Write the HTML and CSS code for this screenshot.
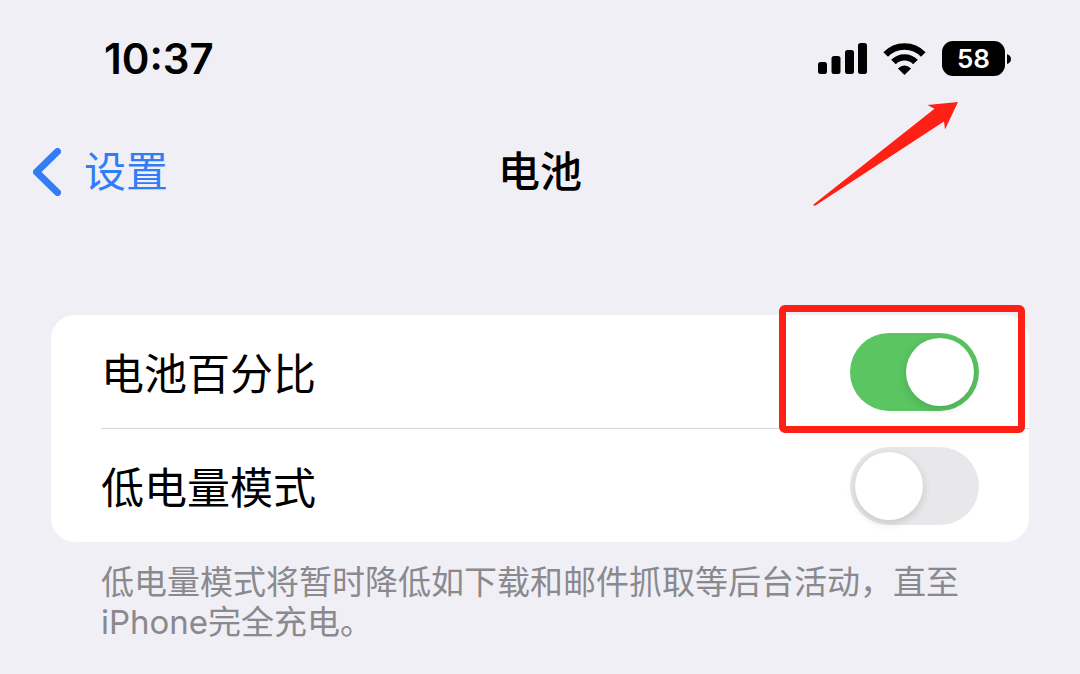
FILE: index.html
```html
<!DOCTYPE html>
<html lang="zh-CN">
<head>
  <meta charset="UTF-8" />
  <meta name="viewport" content="width=device-width, initial-scale=1.0" />
  <title>电池</title>
  <link rel="stylesheet" href="styles.css">
</head>
<body>
  <div class="status-bar">
    <span class="time">10:37</span>
    <div class="status-icons">
      <svg class="signal" viewBox="0 0 49 31" aria-hidden="true">
        <rect x="0" y="19" width="9" height="12" rx="2.5" />
        <rect x="13.5" y="13" width="9" height="18" rx="2.5" />
        <rect x="27" y="7" width="9" height="24" rx="2.5" />
        <rect x="40" y="0" width="9" height="31" rx="2.5" />
      </svg>
      <svg class="wifi" viewBox="0 0 127 94" aria-hidden="true">
        <path class="wave" d="M8 33.5A77 77 0 0 1 119 33.5" />
        <path class="wave" d="M31 56A45 45 0 0 1 96 56" />
        <path d="M63.5 94L44 75Q63.5 57 83 75Z" />
      </svg>
      <div class="battery">
        <span class="battery-level">58</span>
        <svg class="battery-cap" viewBox="0 0 4 10" aria-hidden="true">
          <path d="M0 0Q4 1.5 4 5Q4 8.5 0 10Z" />
        </svg>
      </div>
    </div>
    <svg class="arrow" viewBox="0 0 146 105" aria-hidden="true">
      <path d="M145 0L114.500 3L121.500 6.700L0.500 102.500Q0 104 2 103.700L131 19.500L132 27.500Z" />
    </svg>
  </div>

  <header class="nav">
    <a class="back" href="#">
      <svg class="chevron" viewBox="0 0 28 48" aria-hidden="true">
        <path d="M24.500 3.500L3.500 24L24.500 44.500" />
      </svg>
      设置
    </a>
    <h1>电池</h1>
  </header>

  <main>
    <div class="card">
      <div class="row">
        <label for="percentage">电池百分比</label>
        <input class="switch" type="checkbox" id="percentage" checked>
        <div class="highlight"></div>
      </div>
      <div class="row">
        <label for="lowPower">低电量模式</label>
        <input class="switch" type="checkbox" id="lowPower">
      </div>
    </div>
    <p class="note">低电量模式将暂时降低如下载和邮件抓取等后台活动，直至iPhone完全充电。</p>
  </main>
</body>
</html>
```
FILE: styles.css
```css
:root {
  --page: #f0eff5;
  --blue: #327cf6;
  --green: #5ac561;
  --red: #ff2015;
}

* {
  box-sizing: border-box;
}

body {
  margin: 0;
  font-family: Inter, "Noto Sans CJK SC", sans-serif;
  background-color: var(--page);
  color: #000;
}

.status-bar {
  position: relative;
  display: flex;
  align-items: center;
  justify-content: space-between;
  height: 117px;
  padding: 0 69px 0 104px;
}

.time {
  font-size: 42px;
  font-weight: 600;
}

.status-icons {
  display: flex;
  align-items: center;
  gap: 16px;
}

.signal {
  width: 49px;
  height: 31px;
}

.wifi {
  width: 43px;
  height: 32px;
}

.wave {
  fill: none;
  stroke: #000;
  stroke-width: 19;
}

.battery {
  display: flex;
  align-items: center;
  gap: 2px;
}

.battery-level {
  width: 63px;
  border-radius: 11px;
  background-color: #000;
  color: #fff;
  font-size: 26px;
  font-weight: 600;
  line-height: 35px;
  text-align: center;
}

.battery-cap {
  width: 4px;
  height: 10px;
}

/* points at the battery level */
.arrow {
  position: absolute;
  top: 102px;
  right: 121px;
  width: 146px;
  height: 105px;
  fill: var(--red);
}

.nav {
  display: grid;
  grid-template-columns: 1fr auto 1fr;
  align-items: center;
  height: 110px;
  padding: 0 33px;
}

.back {
  display: flex;
  align-items: center;
  gap: 23px;
  color: var(--blue);
  font-size: 42px;
  line-height: 60px;
  text-decoration: none;
}

.chevron {
  width: 28px;
  height: 48px;
  fill: none;
  stroke: var(--blue);
  stroke-width: 7;
  stroke-linecap: round;
  stroke-linejoin: round;
}

h1 {
  margin: 0;
  font-size: 42px;
  font-weight: 500;
  line-height: 60px;
}

main {
  padding: 88px 51px 30px;
}

.card {
  border-radius: 24px;
  background-color: #fff;
}

.row {
  position: relative;
  display: flex;
  align-items: center;
  justify-content: space-between;
  height: 113px;
  margin-left: 50px;
  padding-right: 50px;
}

.row + .row {
  height: 114px;
  border-top: 1px solid #d9d9dc;
}

.row label {
  padding-top: 4px;
  font-size: 43px;
  line-height: 60px;
}

.switch {
  appearance: none;
  width: 129px;
  height: 78px;
  margin: 0;
  padding: 5px;
  border-radius: 39px;
  background-color: #e8e8ea;
}

.switch::before {
  content: "";
  display: block;
  width: 68px;
  height: 68px;
  border-radius: 50%;
  background-color: #fff;
  box-shadow: 0 3px 10px rgba(0, 0, 0, 0.15);
}

.switch:checked {
  background-color: var(--green);
}

.switch:checked::before {
  margin-left: auto;
}

.highlight {
  position: absolute;
  top: -10px;
  right: 4px;
  z-index: 1;
  width: 246px;
  height: 128px;
  border: 7px solid var(--red);
  border-radius: 6px;
  pointer-events: none;
}

.note {
  margin: 20px 0 0;
  padding: 0 50px;
  color: #8a898e;
  font-size: 33px;
  line-height: 40px;
}
```
